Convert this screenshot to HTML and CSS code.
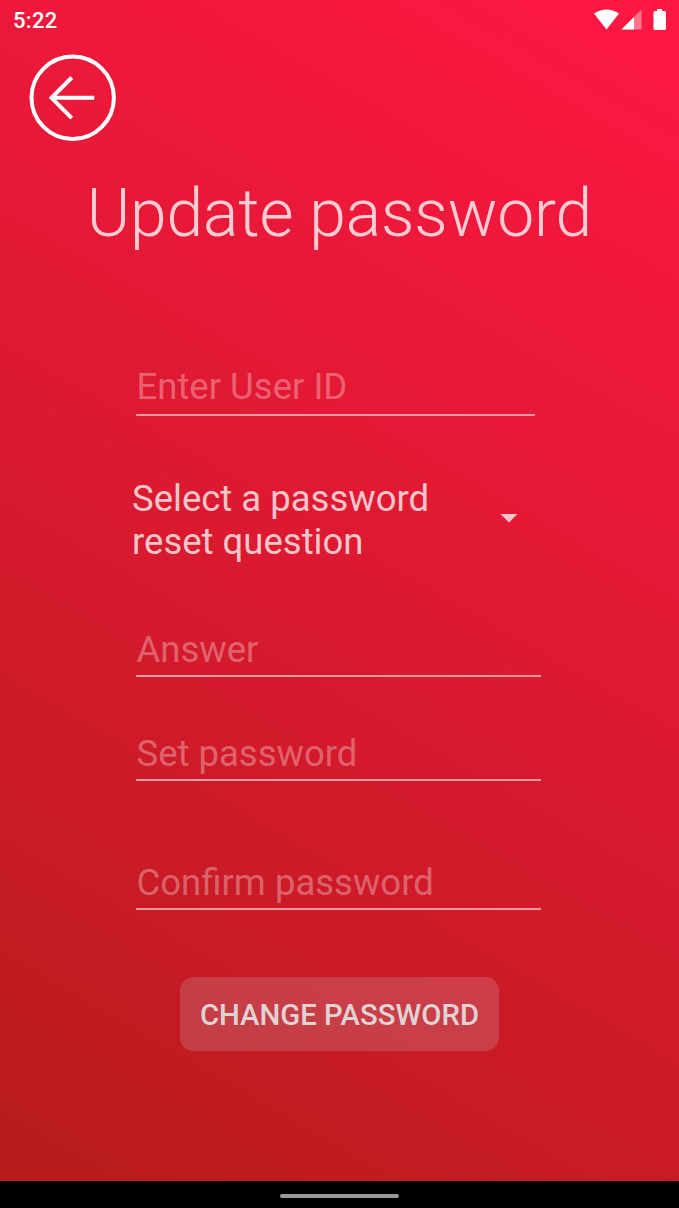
FILE: index.html
```html
<!DOCTYPE html>
<html lang="en">
<head>
<meta charset="utf-8">
<title>Update password</title>
<link rel="stylesheet" href="styles.css">
</head>
<body>
<main class="screen">
  <header class="status">
    <span class="time">5:22</span>
    <svg class="status-icons" width="72" height="22" viewBox="0 0 72 22">
      <path d="M0 4.500Q12.500-3.500 25 4.500L12.500 20.500Z"/>
      <path class="faint" d="M47.500 0.500V20.500H27.500Z"/>
      <path d="M40 8V20.500H27.500Z"/>
      <path d="M63 0H68V2H70.500Q72 2 72 3.500V19.500Q72 21 70.500 21H61Q59.500 21 59.500 19.500V3.500Q59.500 2 61 2H63Z"/>
    </svg>
  </header>
  <button class="back" aria-label="Back">
    <svg width="88" height="88" viewBox="0 0 88 88">
      <circle cx="44.700" cy="43.800" r="41.200"/>
      <path d="M66.300 43.800H24M43.800 23.500L23.500 43.800L43.800 64.100"/>
    </svg>
  </button>
  <h1 class="title">Update password</h1>
  <form class="form">
    <label class="field user">Enter User ID</label>
    <div class="question">
      <span class="question-text">Select a password<br>reset question</span>
      <svg class="caret" width="18" height="9" viewBox="0 0 18 9"><path d="M0.500 0H17.500L9 8.500Z"/></svg>
    </div>
    <label class="field answer">Answer</label>
    <label class="field set">Set password</label>
    <label class="field confirm">Confirm password</label>
    <button class="submit" type="button">CHANGE PASSWORD</button>
  </form>
</main>
<footer class="nav"><div class="pill"></div></footer>
</body>
</html>
```

FILE: styles.css
```css
* { box-sizing: border-box; }
body {
  margin: 0;
  height: 1208px;
  display: flex;
  flex-direction: column;
  font-family: Roboto, sans-serif;
  background: #000;
  overflow: hidden;
}
.screen {
  height: 1181px;
  background: linear-gradient(29.900deg, #b71c1c, #ff1744);
}
.status {
  height: 40px;
  display: flex;
  justify-content: space-between;
  padding: 9px 13px 0 13px;
}
.time {
  font-size: 22px;
  line-height: 24px;
  font-weight: 500;
  letter-spacing: 0.3px;
  color: #fff;
}
.status-icons { fill: #fff; }
.faint { opacity: 0.4; }
.back {
  display: block;
  width: 88px;
  height: 88px;
  margin: 14px 0 0 28px;
  padding: 0;
  border: 0;
  background: none;
}
.back svg { display: block; fill: none; stroke: #fff; stroke-width: 4; }
.title {
  margin: 33px 0 0;
  height: 78px;
  line-height: 78px;
  font-size: 66px;
  font-weight: 300;
  letter-spacing: -0.150px;
  text-align: center;
  white-space: nowrap;
  color: rgba(255, 255, 255, 0.78);
}
.form {
  display: flex;
  flex-direction: column;
  padding: 112px 138px 0 136px;
  font-size: 36.500px;
}
.field {
  display: block;
  height: 51px;
  line-height: 43px;
  padding-left: 0.500px;
  border-bottom: 2px solid rgba(255, 255, 255, 0.56);
  color: rgba(255, 255, 255, 0.32);
  white-space: nowrap;
}
.user { width: 399px; }
.question {
  display: flex;
  align-items: center;
  justify-content: space-between;
  margin: 61px 23px 0 -4px;
  line-height: 43px;
  color: rgba(255, 255, 255, 0.75);
}
.caret { fill: currentColor; margin-top: -4px; }
.answer { margin-top: 65px; height: 49px; }
.set { margin-top: 55px; height: 49px; }
.confirm { margin-top: 80px; height: 49px; }
.submit {
  width: 319px;
  height: 74px;
  margin: 67px 0 0 44px;
  padding: 2px 0 0;
  border: 0;
  border-radius: 14px;
  background: rgba(204, 204, 204, 0.2);
  color: #dfd3d5;
  font: 500 29.300px Roboto, sans-serif;
  white-space: nowrap;
}
.nav {
  height: 27px;
  display: flex;
  justify-content: center;
  padding-top: 13px;
}
.pill { width: 119px; height: 4px; border-radius: 2px; background: #999; }
```
